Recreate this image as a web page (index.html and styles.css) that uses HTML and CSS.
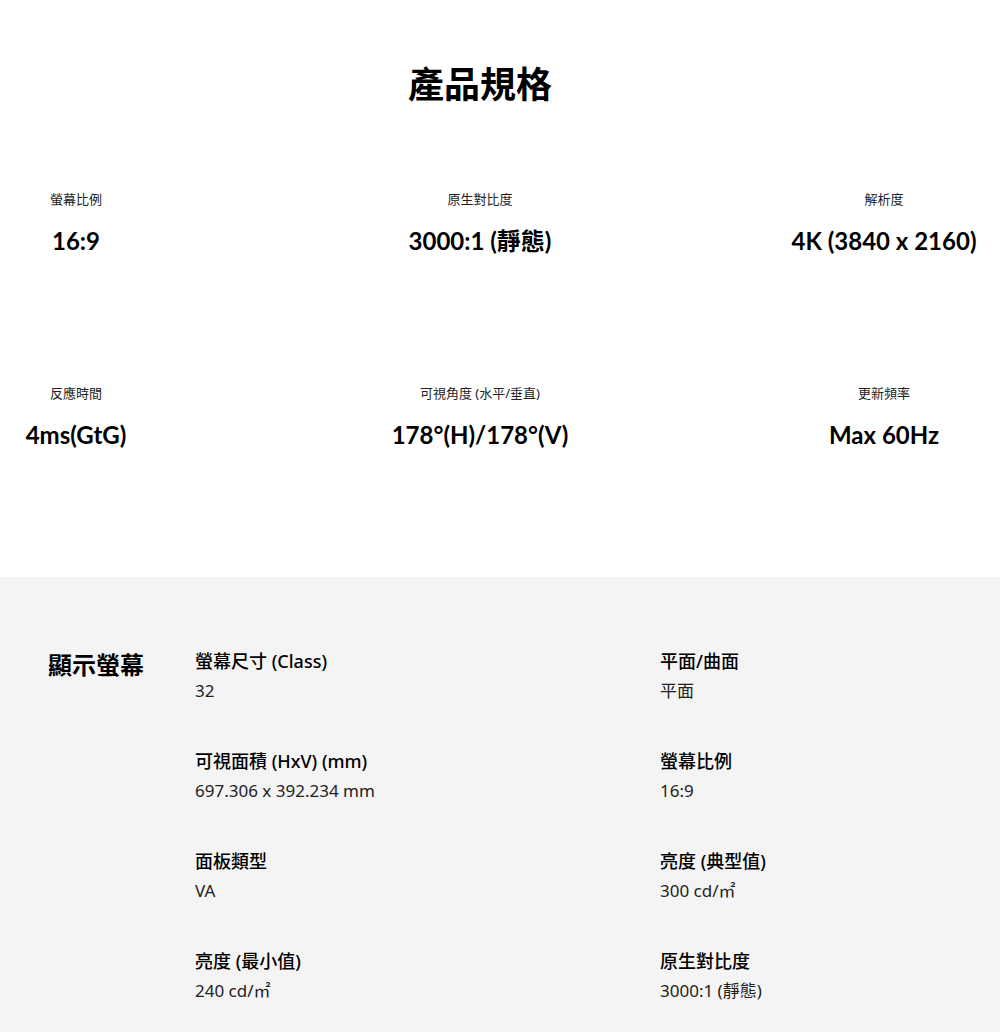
FILE: index.html
```html
<!DOCTYPE html>
<html lang="zh-Hant">
<head>
    <meta charset="utf-8">
    <title>產品規格</title>
    <link rel="stylesheet" href="styles.css">
</head>
<body>
    <section class="highlights">
        <h2 class="highlights-title">產品規格</h2>
        <ul class="highlight-grid">
            <li class="highlight">
                <p class="highlight-label">螢幕比例</p>
                <p class="highlight-value">16:9</p>
            </li>
            <li class="highlight">
                <p class="highlight-label">原生對比度</p>
                <p class="highlight-value">3000:1 (靜態)</p>
            </li>
            <li class="highlight">
                <p class="highlight-label">解析度</p>
                <p class="highlight-value">4K (3840 x 2160)</p>
            </li>
            <li class="highlight">
                <p class="highlight-label">反應時間</p>
                <p class="highlight-value">4ms(GtG)</p>
            </li>
            <li class="highlight">
                <p class="highlight-label">可視角度 (水平/垂直)</p>
                <p class="highlight-value">178°(H)/178°(V)</p>
            </li>
            <li class="highlight">
                <p class="highlight-label">更新頻率</p>
                <p class="highlight-value">Max 60Hz</p>
            </li>
        </ul>
    </section>

    <section class="specs">
        <h3 class="specs-heading">顯示螢幕</h3>
        <dl class="spec-grid">
            <div class="spec">
                <dt>螢幕尺寸 (Class)</dt>
                <dd>32</dd>
            </div>
            <div class="spec">
                <dt>平面/曲面</dt>
                <dd>平面</dd>
            </div>
            <div class="spec">
                <dt>可視面積 (HxV) (mm)</dt>
                <dd>697.306 x 392.234 mm</dd>
            </div>
            <div class="spec">
                <dt>螢幕比例</dt>
                <dd>16:9</dd>
            </div>
            <div class="spec">
                <dt>面板類型</dt>
                <dd>VA</dd>
            </div>
            <div class="spec">
                <dt>亮度 (典型值)</dt>
                <dd>300 cd/㎡</dd>
            </div>
            <div class="spec">
                <dt>亮度 (最小值)</dt>
                <dd>240 cd/㎡</dd>
            </div>
            <div class="spec">
                <dt>原生對比度</dt>
                <dd>3000:1 (靜態)</dd>
            </div>
        </dl>
    </section>
</body>
</html>
```

FILE: styles.css
```css
:root {
    --text: #000000;
    --label: #222222;
    --gray-bg: #f4f4f4;
}

body {
    margin: 0;
    background-color: #ffffff;
    color: var(--text);
    font-family: "Noto Sans", "Noto Sans CJK TC", sans-serif;
}

.highlights {
    width: 960px;
    padding: 62px 0 126px;
}

.highlights-title {
    margin: 0 0 82px;
    text-align: center;
    font-size: 36px;
    font-weight: 700;
    line-height: 46px;
}

.highlight-grid {
    list-style: none;
    margin: 0;
    padding: 0;
    display: grid;
    grid-template-columns: repeat(3, 152px);
    justify-content: space-between;
    row-gap: 127px;
}

.highlight {
    text-align: center;
    white-space: nowrap;
    display: flex;
    flex-direction: column;
    align-items: center;
}

.highlight-label {
    margin: 0;
    font-size: 13px;
    line-height: 18px;
    color: #222222;
}

.highlight-value {
    margin: 17px 0 0;
    font-family: "Lato", "Noto Sans CJK TC", sans-serif;
    font-size: 24px;
    font-weight: 700;
    line-height: 32px;
}

.specs {
    background-color: var(--gray-bg);
    display: flex;
    padding: 70px 0 27px 48px;
}

.specs-heading {
    margin: 2px 0 0;
    width: 147px;
    flex-shrink: 0;
    font-size: 24px;
    font-weight: 700;
    line-height: 32px;
}

.spec-grid {
    margin: 0;
    display: grid;
    grid-template-columns: 465px 1fr;
    row-gap: 42px;
}

.spec dt {
    font-size: 18px;
    font-weight: 500;
    line-height: 29px;
}

.spec dd {
    margin: 0;
    font-size: 17px;
    line-height: 29px;
    color: var(--label);
}
```
